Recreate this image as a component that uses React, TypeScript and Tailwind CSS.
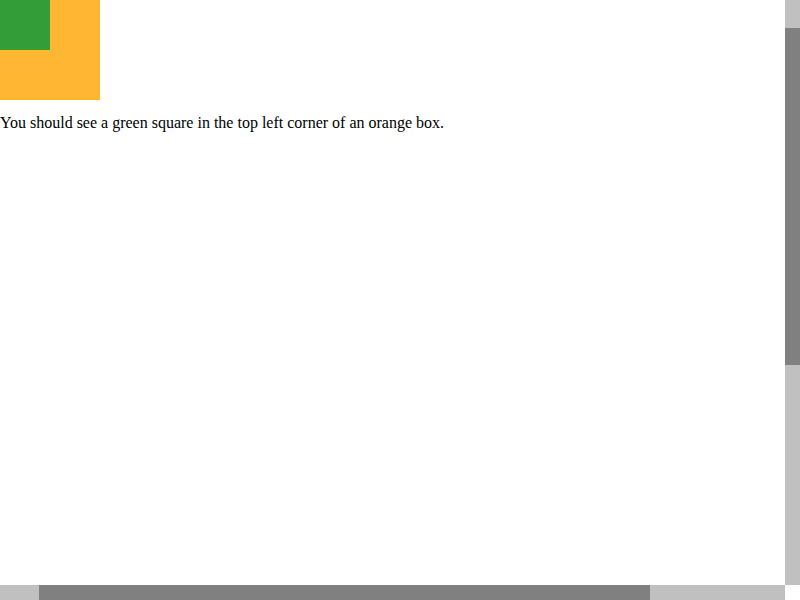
export default function App() {
  return (
    <div className="flex h-screen w-screen flex-col overflow-hidden bg-white">
      <div className="flex min-h-0 flex-1">
        {/* Page content */}
        <main className="min-w-0 flex-1 overflow-hidden font-['Liberation_Serif',serif] text-base text-black">
          <div className="h-[100px] w-[100px] bg-[#ffb733]">
            <div className="h-[50px] w-[50px] bg-[#339d37]" />
          </div>
          <p className="mb-4 mt-[14px] whitespace-nowrap leading-[18px]">
            You should see a green square in the top left corner of an orange box.
          </p>
        </main>

        {/* Vertical scrollbar */}
        <div className="flex w-[15px] flex-col bg-[#c0c0c0]">
          <div className="h-[28px]" />
          <div className="h-[337px] bg-[#808080]" />
        </div>
      </div>

      {/* Horizontal scrollbar + corner */}
      <div className="flex h-[15px]">
        <div className="flex flex-1 bg-[#c0c0c0]">
          <div className="w-[39px]" />
          <div className="w-[611px] bg-[#808080]" />
        </div>
        <div className="w-[15px] bg-white" />
      </div>
    </div>
  );
}
